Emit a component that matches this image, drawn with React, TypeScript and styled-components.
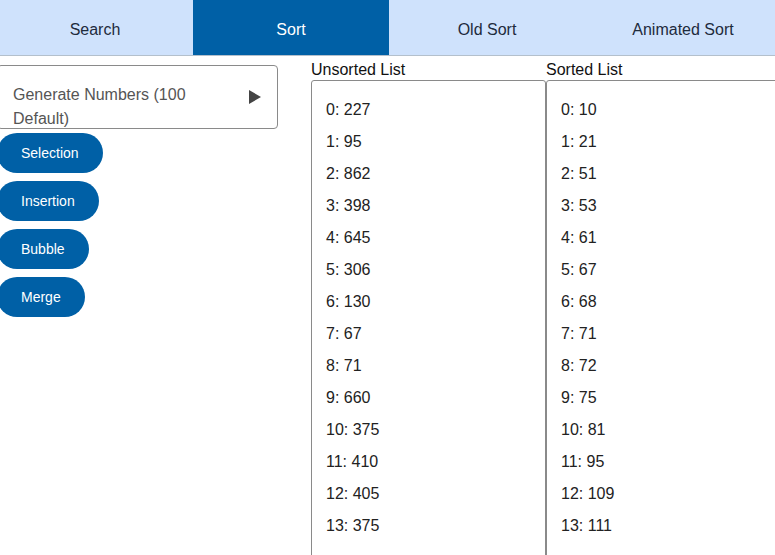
import React from "react";
import styled, { createGlobalStyle } from "styled-components";

const Global = createGlobalStyle`
  html, body { margin: 0; padding: 0; overflow: hidden; background: #fff; }
  body { font-family: "Liberation Sans", Arial, sans-serif; }
`;

const Page = styled.div`
  width: 775px;
  height: 555px;
  overflow: hidden;
`;

const TabBar = styled.nav`
  display: grid;
  grid-template-columns: repeat(4, 196px);
  margin-left: -3px;
  width: 784px;
  height: 55px;
  background: #cfe2fc;
  border-bottom: 1px solid #b4c0cc;
`;

const Tab = styled.div<{ $active?: boolean }>`
  display: flex;
  align-items: center;
  justify-content: center;
  padding-top: 4px;
  font-size: 16px;
  color: ${(p) => (p.$active ? "#ffffff" : "#1e2b3c")};
  background: ${(p) => (p.$active ? "#0060a6" : "transparent")};
`;

const Main = styled.main`
  display: flex;
  align-items: flex-start;
`;

const Controls = styled.section`
  width: 281px;
  margin-left: -3px;
  margin-top: 9px;
  display: flex;
  flex-direction: column;
  align-items: flex-start;
  gap: 8px;
  flex-shrink: 0;
`;

const Generate = styled.div`
  box-sizing: border-box;
  width: 281px;
  height: 64px;
  border: 1px solid #8a8a8a;
  border-radius: 4px;
  display: flex;
  align-items: flex-start;
  justify-content: space-between;
  padding: 17px 16px 0 15px;
  margin-bottom: -4px;
  color: #555;
  font-size: 16px;
  line-height: 24px;
  overflow: visible;
`;

const GenText = styled.span`
  width: 200px;
`;

const Arrow = styled.span`
  width: 0;
  height: 0;
  margin-top: 7px;
  border-top: 7px solid transparent;
  border-bottom: 7px solid transparent;
  border-left: 12px solid #444;
`;

const SortButton = styled.button`
  height: 40px;
  border: none;
  border-radius: 20px;
  background: #0060a6;
  color: #fff;
  font-family: "Liberation Sans", Arial, sans-serif;
  font-size: 14px;
  padding: 0 24px;
  cursor: pointer;
`;

const Lists = styled.div`
  display: flex;
  margin-left: 33px;
  margin-top: 4px;
`;

const ListColumn = styled.div`
  display: flex;
  flex-direction: column;
  flex-shrink: 0;
`;

const ListLabel = styled.div`
  font-size: 16px;
  line-height: 20px;
  color: #111;
`;

const ListBox = styled.div`
  box-sizing: border-box;
  width: 235px;
  height: 520px;
  border: 1px solid #8a8a8a;
  border-radius: 3px;
  padding: 13px 14px;
`;

const Item = styled.div`
  font-size: 16px;
  line-height: 32px;
  color: #222;
`;

const unsorted = [227, 95, 862, 398, 645, 306, 130, 67, 71, 660, 375, 410, 405, 375];
const sorted = [10, 21, 51, 53, 61, 67, 68, 71, 72, 75, 81, 95, 109, 111];

export default function App() {
  return (
    <Page>
      <Global />
      <TabBar>
        <Tab>Search</Tab>
        <Tab $active>Sort</Tab>
        <Tab>Old Sort</Tab>
        <Tab>Animated Sort</Tab>
      </TabBar>
      <Main>
        <Controls>
          <Generate>
            <GenText>Generate Numbers (100 Default)</GenText>
            <Arrow />
          </Generate>
          <SortButton>Selection</SortButton>
          <SortButton>Insertion</SortButton>
          <SortButton>Bubble</SortButton>
          <SortButton>Merge</SortButton>
        </Controls>
        <Lists>
          <ListColumn>
            <ListLabel>Unsorted List</ListLabel>
            <ListBox>
              {unsorted.map((v, i) => (
                <Item key={i}>
                  {i}: {v}
                </Item>
              ))}
            </ListBox>
          </ListColumn>
          <ListColumn>
            <ListLabel>Sorted List</ListLabel>
            <ListBox>
              {sorted.map((v, i) => (
                <Item key={i}>
                  {i}: {v}
                </Item>
              ))}
            </ListBox>
          </ListColumn>
        </Lists>
      </Main>
    </Page>
  );
}
